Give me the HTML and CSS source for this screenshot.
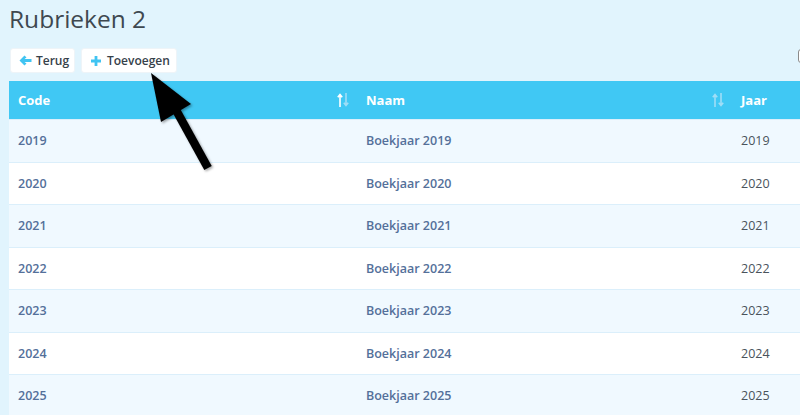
FILE: index.html
```html
<!DOCTYPE html>
<html>
<head>
<meta charset="utf-8">
<link rel="stylesheet" href="styles.css">
</head>
<body>
<div class="page">
  <h1 class="title">Rubrieken 2</h1>
  <div class="toolbar">
    <button class="btn btn-back"><svg class="ico" viewBox="0 0 13 11" width="13" height="11"><path d="M0.5 5.5 L5.5 0.5 L7.5 2.5 L5.5 4 L12.5 4 L12.5 7 L5.5 7 L7.5 8.5 L5.5 10.5 Z" fill="#40c4f2"/></svg>Terug</button>
    <button class="btn btn-add"><svg class="ico" viewBox="0 0 10 10" width="10" height="10"><path d="M3.6 0h2.8v3.6h3.6v2.8h-3.6v3.6h-2.8v-3.6h-3.6v-2.8h3.6z" fill="#40c4f2"/></svg>Toevoegen</button>
    <span class="spacer"></span>
    <span class="check"></span>
  </div>
  <div class="table">
    <div class="row head">
      <div class="cell c1">Code<svg class="sort" viewBox="0 0 12 14" width="12" height="14"><path d="M3 14V2M0.8 4.2L3 1.5L5.2 4.2" stroke="#fff" stroke-width="1.6" fill="none"/><path d="M9 0V12M6.8 9.8L9 12.5L11.2 9.8" stroke="#9fdef7" stroke-width="1.6" fill="none"/></svg></div>
      <div class="cell c2">Naam<svg class="sort" viewBox="0 0 12 14" width="12" height="14"><path d="M3 14V2M0.8 4.2L3 1.5L5.2 4.2" stroke="#9fdef7" stroke-width="1.6" fill="none"/><path d="M9 0V12M6.8 9.8L9 12.5L11.2 9.8" stroke="#9fdef7" stroke-width="1.6" fill="none"/></svg></div>
      <div class="cell c3">Jaar</div>
    </div>
    <div class="row odd"><div class="cell c1">2019</div><div class="cell c2">Boekjaar 2019</div><div class="cell c3">2019</div></div>
    <div class="row"><div class="cell c1">2020</div><div class="cell c2">Boekjaar 2020</div><div class="cell c3">2020</div></div>
    <div class="row odd"><div class="cell c1">2021</div><div class="cell c2">Boekjaar 2021</div><div class="cell c3">2021</div></div>
    <div class="row"><div class="cell c1">2022</div><div class="cell c2">Boekjaar 2022</div><div class="cell c3">2022</div></div>
    <div class="row odd"><div class="cell c1">2023</div><div class="cell c2">Boekjaar 2023</div><div class="cell c3">2023</div></div>
    <div class="row"><div class="cell c1">2024</div><div class="cell c2">Boekjaar 2024</div><div class="cell c3">2024</div></div>
    <div class="row odd"><div class="cell c1">2025</div><div class="cell c2">Boekjaar 2025</div><div class="cell c3">2025</div></div>
  </div>
  <svg class="arrow" width="800" height="415" viewBox="0 0 800 415">
    <defs>
      <filter id="sh" x="-20%" y="-20%" width="140%" height="140%">
        <feDropShadow dx="1.5" dy="1.5" stdDeviation="1.2" flood-color="#000" flood-opacity="0.35"/>
      </filter>
    </defs>
    <g filter="url(#sh)">
      <line x1="176" y1="110" x2="208" y2="168" stroke="#000" stroke-width="8.5"/>
      <polygon points="151,73 161,122 191,104" fill="#000"/>
    </g>
  </svg>
</div>
</body>
</html>
```
FILE: styles.css
```css
html, body {
  margin: 0;
  padding: 0;
}
body {
  background: #e1f4fd;
  font-family: "Open Sans", "Liberation Sans", sans-serif;
  width: 800px;
  height: 415px;
  overflow: hidden;
}
.page {
  position: relative;
  padding-left: 9px;
  height: 415px;
  overflow: hidden;
}
.title {
  margin: 0;
  padding-top: 2px;
  font-size: 24.5px;
  line-height: 34px;
  font-weight: 400;
  color: #3e4850;
}
.toolbar {
  display: flex;
  align-items: center;
  gap: 6px;
  margin-top: 12px;
  padding-left: 1px;
  height: 25px;
}
.btn {
  display: flex;
  align-items: center;
  height: 25px;
  padding: 0;
  background: #fff;
  border: 1px solid #eef4f8;
  border-radius: 3px;
  font-family: inherit;
  font-size: 12px;
  font-weight: 600;
  color: #36414a;
  flex-shrink: 0;
}
.btn-back { width: 65px; padding-left: 8px; gap: 4px; }
.btn-add { width: 96px; padding-left: 9px; gap: 6px; }
.ico { display: block; flex-shrink: 0; }
.spacer { flex: 1; }
.check {
  display: block;
  flex-shrink: 0;
  box-sizing: border-box;
  width: 14px;
  height: 14px;
  border: 1.5px solid #8a8a8a;
  border-radius: 3px;
  background: #fff;
  margin-right: -12px;
  align-self: flex-start;
  margin-top: 1px;
}
.table {
  margin-top: 8px;
  width: 900px;
}
.row {
  display: grid;
  grid-template-columns: 348px 375px 177px;
  height: 42.5px;
  background: #fff;
  border-top: 1px solid #dbeffb;
  box-sizing: border-box;
}
.row.odd { background: #f0f9ff; }
.row.head {
  background: #40c8f4;
  height: 38px;
  border-top: 0;
}
.cell {
  display: flex;
  align-items: center;
  padding-left: 9px;
  font-size: 12.5px;
  font-weight: 600;
  color: #54709a;
}
.c3 { font-weight: 400; color: #4a535b; }
.head .cell {
  color: #fff;
  font-weight: 700;
  font-size: 13px;
}
.sort {
  margin-left: auto;
  margin-right: 8px;
  display: block;
}
.arrow {
  position: absolute;
  left: 0;
  top: 0;
  pointer-events: none;
}
```
